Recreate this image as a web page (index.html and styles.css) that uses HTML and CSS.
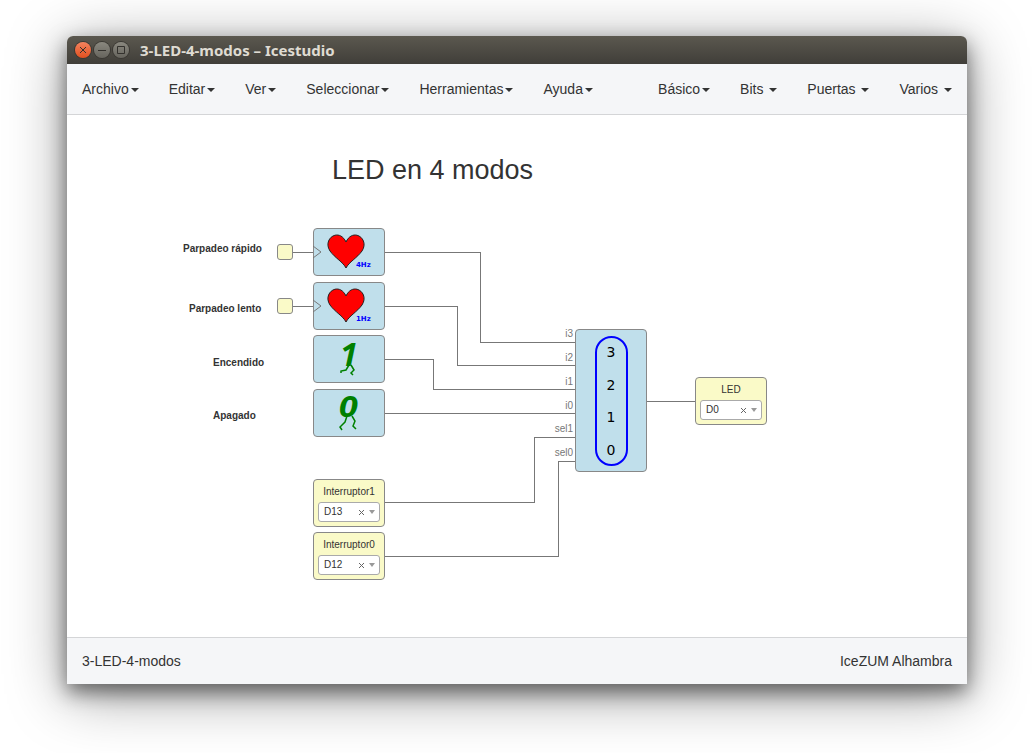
FILE: index.html
```html
<!DOCTYPE html>
<html lang="es">
<head>
<meta charset="utf-8">
<title>3-LED-4-modos – Icestudio</title>
<link rel="stylesheet" href="styles.css">
</head>
<body>
<div class="window">
  <header class="titlebar">
    <button class="win-btn win-close" aria-label="Cerrar"><svg viewBox="0 0 16 16"><path d="M5 5l6 6M11 5l-6 6"/></svg></button>
    <button class="win-btn" aria-label="Minimizar"><svg viewBox="0 0 16 16"><path d="M4 8.500h8"/></svg></button>
    <button class="win-btn" aria-label="Maximizar"><svg viewBox="0 0 16 16"><path d="M4.500 4.500h7v7h-7z"/></svg></button>
    <h1 class="win-title">3-LED-4-modos – Icestudio</h1>
  </header>
  <nav class="menubar">
    <div class="menu-group">
      <button class="menu">Archivo<span class="caret"></span></button>
      <button class="menu">Editar<span class="caret"></span></button>
      <button class="menu">Ver<span class="caret"></span></button>
      <button class="menu">Seleccionar<span class="caret"></span></button>
      <button class="menu">Herramientas<span class="caret"></span></button>
      <button class="menu">Ayuda<span class="caret"></span></button>
    </div>
    <div class="menu-group">
      <button class="menu">Básico<span class="caret"></span></button>
      <button class="menu">Bits <span class="caret"></span></button>
      <button class="menu">Puertas <span class="caret"></span></button>
      <button class="menu">Varios <span class="caret"></span></button>
    </div>
  </nav>
  <main class="canvas">
    <svg class="wires" width="900" height="522" viewBox="0 0 900 522">
      <g class="wire-lines">
        <path d="M226 137H246M226 191H246"/>
        <path d="M318 137H413V227H509"/>
        <path d="M318 191H390V250H509"/>
        <path d="M318 244H366V274H509"/>
        <path d="M318 298H509"/>
        <path d="M318 387H467V322H509"/>
        <path d="M318 441H491V346H509"/>
        <path d="M580 286H628"/>
      </g>
      <g class="port-names">
        <text x="506" y="222">i3</text>
        <text x="506" y="246">i2</text>
        <text x="506" y="270">i1</text>
        <text x="506" y="294">i0</text>
        <text x="506" y="317">sel1</text>
        <text x="506" y="341">sel0</text>
      </g>
    </svg>

    <h2 class="note heading">LED en 4 modos</h2>
    <p class="note note-fast">Parpadeo rápido</p>
    <p class="note note-slow">Parpadeo lento</p>
    <p class="note note-on">Encendido</p>
    <p class="note note-off">Apagado</p>

    <div class="pin pin-fast"></div>
    <div class="pin pin-slow"></div>

    <div class="block heart-fast">
      <svg viewBox="0 0 72 48">
        <path class="clock" d="M0 18L8 24L0 30"/>
        <path class="heart" d="M33 40C30 34 22 30 17 23C9 11 26 -1 33 14C40 -1 57 11 49 23C44 30 36 34 33 40Z"/>
        <text class="freq" x="43" y="39">4Hz</text>
      </svg>
    </div>
    <div class="block heart-slow">
      <svg viewBox="0 0 72 48">
        <path class="clock" d="M0 18L8 24L0 30"/>
        <path class="heart" d="M33 40C30 34 22 30 17 23C9 11 26 -1 33 14C40 -1 57 11 49 23C44 30 36 34 33 40Z"/>
        <text class="freq" x="43" y="39">1Hz</text>
      </svg>
    </div>
    <div class="block bit-one">
      <svg viewBox="0 0 72 48">
        <text class="bit one" x="27" y="31">1</text>
        <path class="legs" d="M36 30L33 35L28 36L28 38M38 30L41 35L38 38L40 40"/>
      </svg>
    </div>
    <div class="block bit-zero">
      <svg viewBox="0 0 72 48">
        <text class="bit zero" x="26" y="28">0</text>
        <path class="legs" d="M34 27L32 33L27 38L29 41M39 27L42 32L40 37L43 40"/>
      </svg>
    </div>
    <div class="block mux">
      <svg viewBox="0 0 72 143">
        <rect class="ring" x="21" y="8" width="31" height="128" rx="15.500"/>
        <g class="mux-digits">
          <text x="36" y="28">3</text>
          <text x="36" y="61">2</text>
          <text x="36" y="93">1</text>
          <text x="36" y="126">0</text>
        </g>
      </svg>
    </div>

    <div class="io io-sw1">
      <label for="sw1">Interruptor1</label>
      <div class="picker">
        <select id="sw1"><option>D13</option></select>
        <button class="clear" aria-label="Quitar D13"><svg viewBox="0 0 5 5"><path d="M0 0L5 5M5 0L0 5"/></svg></button>
        <span class="arrow"></span>
      </div>
    </div>
    <div class="io io-sw0">
      <label for="sw0">Interruptor0</label>
      <div class="picker">
        <select id="sw0"><option>D12</option></select>
        <button class="clear" aria-label="Quitar D12"><svg viewBox="0 0 5 5"><path d="M0 0L5 5M5 0L0 5"/></svg></button>
        <span class="arrow"></span>
      </div>
    </div>
    <div class="io io-led">
      <label for="led">LED</label>
      <div class="picker">
        <select id="led"><option>D0</option></select>
        <button class="clear" aria-label="Quitar D0"><svg viewBox="0 0 5 5"><path d="M0 0L5 5M5 0L0 5"/></svg></button>
        <span class="arrow"></span>
      </div>
    </div>
  </main>
  <footer class="statusbar">
    <span>3-LED-4-modos</span>
    <span>IceZUM Alhambra</span>
  </footer>
</div>
</body>
</html>
```
FILE: styles.css
```css
* { box-sizing: border-box; }

body {
  margin: 0;
  min-height: 100vh;
  padding: 36px 65px 69px 67px;
  display: flex;
  background: #fff;
  color: #333;
  font: 14px/20px "Liberation Sans", Arial, sans-serif;
  overflow: hidden;
}

button, select { font: inherit; color: inherit; border: 0; padding: 0; background: none; }
h1, h2, p { margin: 0; }

.window {
  flex: 1;
  display: flex;
  flex-direction: column;
  border-radius: 6px 6px 0 0;
  box-shadow: 0 8px 20px rgba(0, 0, 0, .5), 0 10px 60px rgba(0, 0, 0, .4);
}

.titlebar {
  height: 28px;
  display: flex;
  align-items: center;
  gap: 3px;
  padding: 0 8px;
  border-radius: 6px 6px 0 0;
  background: linear-gradient(#5b584f, #403e39);
}
.win-btn {
  width: 16px;
  height: 16px;
  border-radius: 50%;
  background: linear-gradient(#8a887f, #66645d);
  box-shadow: 0 0 0 1px #3a3833;
}
.win-close { background: linear-gradient(#f4835f, #e2501f); }
.win-btn svg { display: block; fill: none; stroke: #33312d; }
.win-title {
  margin-left: 8px;
  color: #dfdbd2;
  font: bold 15px/20px "Noto Sans", sans-serif;
}

.menubar {
  height: 51px;
  display: flex;
  justify-content: space-between;
  background: #f5f6f8;
  border-bottom: 1px solid #d4d5d7;
}
.menu-group { display: flex; }
.menu { padding: 0 15px; white-space: pre; }
.caret {
  display: inline-block;
  margin-left: 2px;
  vertical-align: middle;
  border: 4px solid transparent;
  border-top-color: #333;
  border-bottom: 0;
}

.canvas { flex: 1; position: relative; background: #fff; }
.wires { position: absolute; left: 0; top: 0; }
.wire-lines { fill: none; stroke: #777; shape-rendering: crispEdges; }
.port-names { fill: #777; font-size: 10px; text-anchor: end; }

.note { position: absolute; font: bold 10px/12px "Liberation Sans", Arial, sans-serif; white-space: nowrap; }
.heading { left: 265px; top: 39px; font-size: 27px; font-weight: normal; line-height: 32px; }
.note-fast { left: 116px; top: 128px; }
.note-slow { left: 122px; top: 188px; }
.note-on { left: 146px; top: 242px; }
.note-off { left: 146px; top: 295px; }

.pin {
  position: absolute;
  left: 210px;
  width: 16px;
  height: 16px;
  border: 1px solid #888;
  border-radius: 3px;
  background: #fafac8;
}
.pin-fast { top: 129px; }
.pin-slow { top: 183px; }

.block, .io {
  position: absolute;
  left: 246px;
  width: 72px;
  height: 48px;
  border: 1px solid #888;
  border-radius: 4px;
}
.block { background: #c0dfeb; }
.block svg { display: block; margin: -1px; }
.heart-fast { top: 113px; }
.heart-slow { top: 167px; }
.bit-one { top: 220px; }
.bit-zero { top: 274px; }
.mux { left: 508px; top: 214px; height: 143px; }

.clock { fill: none; stroke: #777; }
.heart { fill: #f00; stroke: #222; }
.freq { fill: #00f; font: bold 7px "DejaVu Sans", sans-serif; }
.bit { fill: #008000; }
.one { font: italic bold 32px "Noto Sans", sans-serif; }
.zero { font: italic bold 28px "DejaVu Sans", sans-serif; }
.block svg { overflow: visible; }
.legs { fill: none; stroke: #008000; stroke-width: 1.5; }
.ring { fill: none; stroke: #00f; stroke-width: 2; }
.mux-digits { fill: #000; font: 14px "DejaVu Sans", sans-serif; text-anchor: middle; }

.io {
  padding: 6px 4px 4px;
  display: flex;
  flex-direction: column;
  justify-content: space-between;
  background: #fafac8;
  font-size: 10px;
  line-height: 12px;
  text-align: center;
}
.io-sw1 { top: 364px; }
.io-sw0 { top: 417px; }
.io-led { left: 628px; top: 262px; }
.picker {
  height: 20px;
  display: flex;
  align-items: center;
  padding: 0 4px 0 5px;
  border: 1px solid #aaa;
  border-radius: 3px;
  background: #fff;
}
.picker select { flex: 1; min-width: 0; appearance: none; }
.clear { width: 5px; height: 5px; margin-right: 5px; }
.clear svg { display: block; stroke: #666; stroke-width: 1; }
.arrow { border: 3px solid transparent; border-top: 4px solid #999; border-bottom: 0; }

.statusbar {
  height: 47px;
  display: flex;
  align-items: center;
  justify-content: space-between;
  padding: 0 15px;
  background: #f5f6f8;
  border-top: 1px solid #d4d5d7;
}
```
